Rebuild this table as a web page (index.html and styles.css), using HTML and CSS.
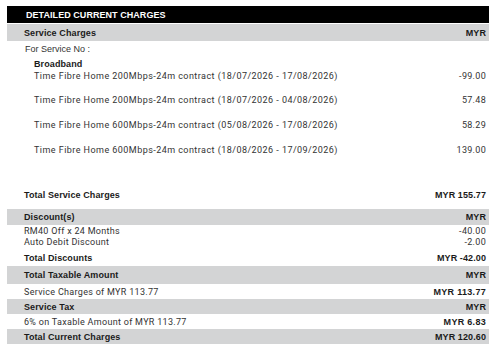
FILE: index.html
```html
<!DOCTYPE html>
<html>
<head>
<meta charset="utf-8">
<link rel="stylesheet" href="styles.css">
</head>
<body>
<div class="sheet">
  <div class="title">DETAILED CURRENT CHARGES</div>
  <div class="band h17"><span class="b">Service Charges</span><span class="b">MYR</span></div>
  <div class="row svc">For Service No :</div>
  <div class="group">
    <div class="row bb"><span class="b">Broadband</span></div>
    <div class="row item"><span>Time Fibre Home 200Mbps-24m contract (18/07/2026 - 17/08/2026)</span><span>-99.00</span></div>
    <div class="row item gap14"><span>Time Fibre Home 200Mbps-24m contract (18/07/2026 - 04/08/2026)</span><span>57.48</span></div>
    <div class="row item gap15"><span>Time Fibre Home 600Mbps-24m contract (05/08/2026 - 17/08/2026)</span><span>58.29</span></div>
    <div class="row item gap15"><span>Time Fibre Home 600Mbps-24m contract (18/08/2026 - 17/09/2026)</span><span>139.00</span></div>
  </div>
  <div class="row tsc"><span class="b">Total Service Charges</span><span class="b">MYR 155.77</span></div>
  <div class="band disc"><span class="b">Discount(s)</span><span class="b">MYR</span></div>
  <div class="row line"><span>RM40 Off x 24 Months</span><span>-40.00</span></div>
  <div class="row line"><span>Auto Debit Discount</span><span>-2.00</span></div>
  <div class="row td"><span class="b">Total Discounts</span><span class="b">MYR -42.00</span></div>
  <div class="band tax1"><span class="b">Total Taxable Amount</span><span class="b">MYR</span></div>
  <div class="row line l2"><span>Service Charges of MYR 113.77</span><span class="b">MYR 113.77</span></div>
  <div class="band h15"><span class="b">Service Tax</span><span class="b">MYR</span></div>
  <div class="row line l2"><span>6% on Taxable Amount of MYR 113.77</span><span class="b">MYR 6.83</span></div>
  <div class="band h15"><span class="b">Total Current Charges</span><span class="b">MYR 120.60</span></div>
</div>
</body>
</html>
```

FILE: styles.css
```css
* { box-sizing: border-box; }
body {
  margin: 0;
  background: #fff;
  font-family: Roboto, "Liberation Sans", sans-serif;
  color: #222;
  font-size: 9px;
}
.sheet {
  margin: 6px 0 0 7px;
  width: 482px;
  display: flex;
  flex-direction: column;
}
.title {
  background: #000;
  color: #fff;
  height: 17px;
  padding-left: 19px;
  display: flex;
  align-items: center;
  font-family: "Liberation Sans", Arial, sans-serif;
  font-weight: bold;
  font-size: 9px;
  letter-spacing: 0.05px;
}
.b {
  font-family: "Liberation Sans", Arial, sans-serif;
  font-weight: bold;
  font-size: 9px;
  letter-spacing: 0.1px;
  color: #1a1a1a;
}
.band, .row {
  display: flex;
  justify-content: space-between;
  align-items: center;
  padding: 0 3px 0 17px;
}
.band { background: #d3d4d5; }
.h17 { height: 17px; margin-top: 1px; }
.h15 { height: 15px; }
.svc {
  height: 15px;
  font-family: "Liberation Sans", Arial, sans-serif;
  font-size: 9px;
  color: #333;
  padding-left: 18px;
}
.group .row { padding-left: 27px; }
.bb { height: 15px; }
.item { height: 10px; letter-spacing: 0.45px; color: #333; }
.gap14 { margin-top: 14px; }
.gap15 { margin-top: 15px; }
.tsc { height: 12px; margin-top: 34px; }
.disc { height: 16px; margin-top: 8px; }
.line { height: 11px; letter-spacing: 0.3px; color: #333; }
.td { height: 14px; margin-top: 4px; }
.tax1 { height: 18px; margin-top: 1px; }
.l2 { height: 15px; }
.item span:last-child, .line span:last-child { letter-spacing: 0.3px; }
.line .b { letter-spacing: 0.1px; }
```
